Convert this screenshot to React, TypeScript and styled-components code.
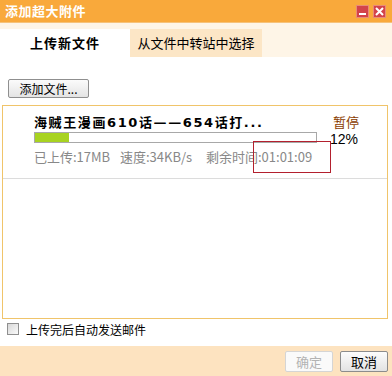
import styled, { createGlobalStyle } from "styled-components";

const GlobalStyle = createGlobalStyle`
  html, body { margin: 0; padding: 0; background: #fff; }
  body {
    font-family: "Noto Sans CJK SC", "Liberation Sans", sans-serif;
    font-size: 12px;
  }
`;

const Dialog = styled.div`
  width: 392px;
  height: 376px;
  display: flex;
  flex-direction: column;
  background: #fff;
  overflow: hidden;
`;

const TitleBar = styled.div`
  height: 22px;
  flex: none;
  background: #f9a93b;
  display: flex;
  align-items: center;
  padding: 0 6px 0 5px;
  border-bottom: 1px solid #f6c27a;
`;

const Title = styled.div`
  flex: 1;
  color: #fff;
  font-weight: bold;
  font-size: 13px;
  line-height: 22px;
  letter-spacing: 0.5px;
`;

const WinButtons = styled.div`
  display: flex;
  gap: 4px;
`;

const WinButton = styled.div`
  width: 13px;
  height: 13px;
  background: #d3434a;
  border: 1px solid #e88a76;
  box-sizing: border-box;
  display: flex;
  align-items: center;
  justify-content: center;
`;

const TabStrip = styled.div`
  height: 34px;
  flex: none;
  background: #fef5e7;
  display: flex;
  align-items: flex-end;
`;

const Tab = styled.div<{ $active?: boolean }>`
  height: 28px;
  line-height: 28px;
  text-align: center;
  font-size: 13px;
  color: #000;
  width: ${(p) => (p.$active ? "130px" : "132px")};
  background: ${(p) => (p.$active ? "#fff" : "#fce6c6")};
  font-weight: ${(p) => (p.$active ? "bold" : "normal")};
  letter-spacing: ${(p) => (p.$active ? "1px" : "0")};
`;

const Body = styled.div`
  flex: 1;
  display: flex;
  flex-direction: column;
  padding: 22px 4px 0 2px;
`;

const AddButton = styled.button`
  align-self: flex-start;
  margin-left: 6px;
  width: 81px;
  height: 19px;
  padding: 0;
  font-family: inherit;
  font-size: 12px;
  color: #000;
  background: linear-gradient(#fbfbfb, #e4e4e4);
  border: 1px solid #8f8f8f;
  border-radius: 2px;
  line-height: 17px;
`;

const ListBox = styled.div`
  margin-top: 7px;
  height: 214px;
  border: 1px solid #f0c46a;
  box-sizing: border-box;
`;

const FileRow = styled.div`
  height: 73px;
  border-bottom: 1px solid #dcdcdc;
  display: flex;
  padding: 9px 0 0 31px;
  box-sizing: border-box;
  position: relative;
`;

const FileMain = styled.div`
  width: 283px;
  flex: none;
  display: flex;
  flex-direction: column;
`;

const FileName = styled.div`
  font-family: "DejaVu Sans", "Noto Sans CJK SC", sans-serif;
  font-weight: bold;
  font-size: 13px;
  line-height: 16px;
  color: #000;
  letter-spacing: 1.6px;
  white-space: nowrap;
`;

const Progress = styled.div`
  height: 11px;
  margin-top: 1px;
  border: 1px solid #a8a8a8;
  box-sizing: border-box;
  background: #fff;
`;

const ProgressFill = styled.div`
  height: 100%;
  background: #a8d321;
`;

const Stats = styled.div`
  margin-top: 5px;
  display: flex;
  color: #888;
  font-size: 13px;
  line-height: 18px;
`;

const Stat = styled.span<{ $w: number }>`
  width: ${(p) => p.$w}px;
  flex: none;
  white-space: nowrap;
`;

const FileSide = styled.div`
  display: flex;
  flex-direction: column;
  padding-left: 16px;
  margin-top: -1px;
`;

const Pause = styled.div`
  color: #8a3c00;
  font-size: 13px;
  line-height: 16px;
`;

const Percent = styled.div`
  font-family: "Liberation Sans", sans-serif;
  font-size: 14px;
  line-height: 14px;
  color: #000;
  margin: 2px 0 0 -3px;
`;

const Highlight = styled.div`
  position: absolute;
  left: 250px;
  top: 35px;
  width: 78px;
  height: 32px;
  border: 1px solid #b3202e;
  box-sizing: border-box;
`;

const CheckRow = styled.label`
  display: flex;
  align-items: center;
  gap: 7px;
  margin: 2px 0 0 5px;
  height: 16px;
  font-size: 12px;
  color: #000;
`;

const Check = styled.span`
  width: 12px;
  height: 12px;
  box-sizing: border-box;
  border: 1px solid #8f8f8f;
  background: linear-gradient(135deg, #d8d8d8, #fafafa);
`;

const Footer = styled.div`
  height: 30px;
  flex: none;
  background: #fde3c0;
  display: flex;
  justify-content: flex-end;
  align-items: center;
  gap: 7px;
  padding-right: 4px;
`;

const DlgButton = styled.button<{ $disabled?: boolean }>`
  width: 48px;
  height: 21px;
  padding: 0;
  font-family: inherit;
  font-size: 13px;
  border-radius: 2px;
  color: ${(p) => (p.$disabled ? "#b3b3b3" : "#000")};
  border: 1px solid ${(p) => (p.$disabled ? "#d5d5d5" : "#8c8c8c")};
  background: ${(p) =>
    p.$disabled ? "#fafafa" : "linear-gradient(#fcfcfc, #e2e2e2)"};
`;

export default function App() {
  const pct = 12;
  return (
    <>
      <GlobalStyle />
      <Dialog>
        <TitleBar>
          <Title>添加超大附件</Title>
          <WinButtons>
            <WinButton>
              <svg width="9" height="9" viewBox="0 0 9 9">
                <rect x="1" y="6" width="7" height="2" fill="#fff" />
              </svg>
            </WinButton>
            <WinButton>
              <svg width="9" height="9" viewBox="0 0 9 9">
                <path d="M1 1 L8 8 M8 1 L1 8" stroke="#fff" strokeWidth="2" />
              </svg>
            </WinButton>
          </WinButtons>
        </TitleBar>
        <TabStrip>
          <Tab $active>上传新文件</Tab>
          <Tab>从文件中转站中选择</Tab>
        </TabStrip>
        <Body>
          <AddButton>添加文件...</AddButton>
          <ListBox>
            <FileRow>
              <FileMain>
                <FileName>海贼王漫画610话——654话打...</FileName>
                <Progress>
                  <ProgressFill style={{ width: `${pct}%` }} />
                </Progress>
                <Stats>
                  <Stat $w={86}>已上传:17MB</Stat>
                  <Stat $w={86}>速度:34KB/s</Stat>
                  <Stat $w={100}>剩余时间:01:01:09</Stat>
                </Stats>
              </FileMain>
              <FileSide>
                <Pause>暂停</Pause>
                <Percent>{pct}%</Percent>
              </FileSide>
              <Highlight />
            </FileRow>
          </ListBox>
          <CheckRow>
            <Check />
            上传完后自动发送邮件
          </CheckRow>
        </Body>
        <Footer>
          <DlgButton $disabled>确定</DlgButton>
          <DlgButton>取消</DlgButton>
        </Footer>
      </Dialog>
    </>
  );
}
